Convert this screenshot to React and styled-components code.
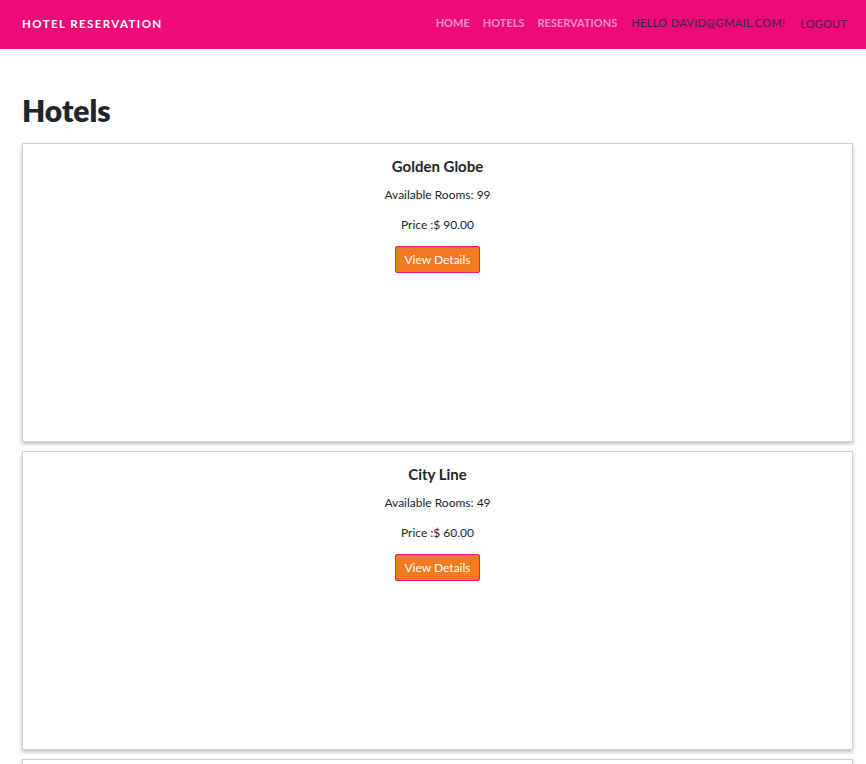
import React from 'react';
import styled, { createGlobalStyle } from 'styled-components';

const hotels = [
  { id: 1, name: 'Golden Globe', rooms: 99, price: '90.00' },
  { id: 2, name: 'City Line', rooms: 49, price: '60.00' },
  { id: 3, name: 'Sea Breeze', rooms: 20, price: '75.00' },
];

const GlobalStyle = createGlobalStyle`
  body {
    margin: 0;
    font-family: Lato, 'Open Sans', sans-serif;
    color: #212529;
    background: #fff;
  }
  * {
    box-sizing: border-box;
  }
`;

const App = () => {
  return (
    <>
      <GlobalStyle />
      <Navbar>
        <Brand>Hotel Reservation</Brand>
        <NavList>
          <NavLink>Home</NavLink>
          <NavLink>Hotels</NavLink>
          <NavLink>Reservations</NavLink>
          <NavText>Hello david@gmail.com!</NavText>
          <NavText $logout>Logout</NavText>
        </NavList>
      </Navbar>
      <Main>
        <Title>Hotels</Title>
        {hotels.map((h) => (
          <Card key={h.id}>
            <CardTitle>{h.name}</CardTitle>
            <CardText>Available Rooms: {h.rooms}</CardText>
            <CardText>Price :$ {h.price}</CardText>
            <DetailsButton>View Details</DetailsButton>
          </Card>
        ))}
      </Main>
    </>
  );
};

const Navbar = styled.nav`
  height: 49px;
  background: #ee0a79;
  display: flex;
  align-items: center;
  justify-content: space-between;
  padding: 0 19px 0 22px;
`;

const Brand = styled.div`
  color: #fff;
  font-size: 11.5px;
  font-weight: 700;
  letter-spacing: 1.4px;
  text-transform: uppercase;
  margin-top: -3px;
`;

const NavList = styled.div`
  display: flex;
  align-items: center;
  gap: 13px;
  margin-top: -4px;
`;

const NavLink = styled.a`
  color: rgba(255, 255, 255, 0.55);
  font-size: 11px;
  font-weight: 700;
  letter-spacing: 0;
  text-transform: uppercase;
  cursor: pointer;
`;

const NavText = styled.span`
  color: #3b2540;
  font-size: 11px;
  letter-spacing: ${(p) => (p.$logout ? '0.2px' : '0.35px')};
  text-transform: uppercase;
  margin-left: ${(p) => (p.$logout ? '2px' : '1px')};
  margin-top: ${(p) => (p.$logout ? '2px' : '0')};
`;

const Main = styled.main`
  padding: 44px 13px 0 22px;
`;

const Title = styled.h1`
  margin: 0 0 15px;
  font-size: 30px;
  font-weight: 800;
  line-height: 35px;
  color: #212529;
`;

const Card = styled.div`
  height: 299px;
  border: 1px solid #d0d0d0;
  box-shadow: 0 2px 4px rgba(0, 0, 0, 0.25);
  margin-bottom: 9px;
  display: flex;
  flex-direction: column;
  align-items: center;
  padding-top: 12px;
`;

const CardTitle = styled.h5`
  margin: 0 0 10px;
  font-size: 15px;
  font-weight: 700;
  line-height: 20px;
`;

const CardText = styled.p`
  margin: 0 0 12px;
  font-size: 12px;
  line-height: 18px;
`;

const DetailsButton = styled.button`
  margin-top: 0;
  width: 85px;
  height: 27px;
  background: #f47a20;
  border: 1px solid #e8197a;
  border-radius: 2px;
  color: #fff;
  font-family: Lato, sans-serif;
  font-size: 12px;
  padding: 0;
  cursor: pointer;
`;

export default App;
